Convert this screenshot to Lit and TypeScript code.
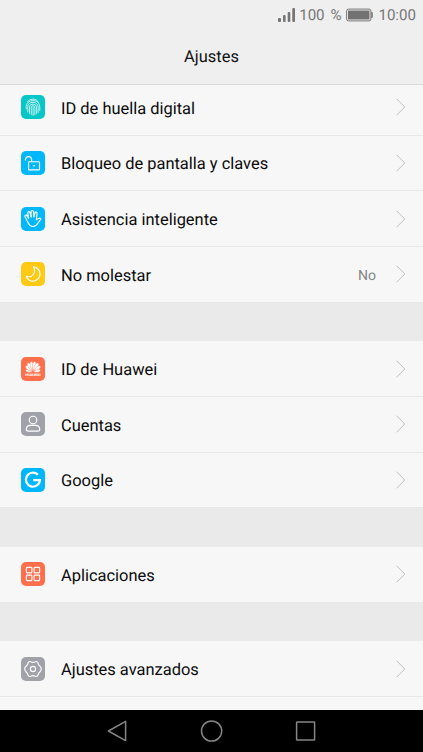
import { LitElement, html, css, svg } from "lit";
import { customElement, property } from "lit/decorators.js";

const petals = [-76, -51, -30, -10, 10, 30, 51, 76];

const glyphs: Record<string, unknown> = {
  finger: svg`<g stroke-width=".85" opacity=".9">
    <path d="M6.6 6.4Q9 4 12 4Q15.5 4 17.4 6.8"/>
    <path d="M5.2 14V11.2Q5.3 8.5 7.2 7.3Q9.2 5.6 12 5.6Q18.6 5.8 18.8 12V15.5"/>
    <path d="M6.8 17V11.8Q7 7.4 12 7.3Q17 7.5 17.2 12.5V17.5"/>
    <path d="M8.5 18.4V12Q8.7 9 12 9Q15.4 9.2 15.6 12.5V18.5"/>
    <path d="M10.3 19.5V12.4Q10.4 10.7 12 10.7Q13.8 10.8 13.9 13V19.8"/>
    <path d="M12.1 12.4V20.3"/></g>`,
  lock: svg`<rect x="7.6" y="10.7" width="10.9" height="8.1" rx=".6"/>
    <path d="M4.5 9.1V8.2A3.1 3.1 0 0 1 10.6 8.2V10.5"/><rect x="12.3" y="14" width="1.5" height="1.5" fill="#fff" stroke="none"/>`,
  hand: svg`<path d="M7.1 15.7L4.2 10.1Q3.6 8.5 4.8 8.1Q5.7 7.9 6.3 9.1L7.7 11.4L6.8 6.1Q6.7 4.7 7.8 4.6Q8.8 4.5 9.1 5.8L10.2 10.1L10 4.8Q10.1 3.5 11.2 3.5Q12.3 3.5 12.5 4.9L12.9 10L14 5.8Q14.4 4.7 15.3 5Q16.3 5.4 16 6.6L15.3 12.9Q17.1 11.5 18.4 11.2Q20 11 19.8 12.3Q18.5 13.8 17 16Q15 19.6 11.7 19.5Q8.9 19.4 7.1 15.7Z"/>`,
  moon: svg`<path d="M12.5 4.9A7.1 7.1 0 1 1 5.2 14.3Q10.3 15.8 12.5 12.2Q14.6 8.6 12.5 4.9Z"/>`,
  huawei: svg`<g fill="#fff" stroke="none">${petals.map((a) => {
    const k = Math.abs(a) > 60 ? 0.72 : Math.abs(a) > 40 ? 0.9 : 1;
    return svg`<path transform="translate(12 15) rotate(${a}) scale(${k})" d="M0 -.6Q-2.4 -5.6 -1.7 -8.6Q-1.1 -10.4 0 -10.6Q1.1 -10.4 1.7 -8.6Q2.4 -5.6 0 -.6Z"
      stroke="#ff6f4c" stroke-width=".4"/>`;
  })}</g><text x="12" y="19.2" text-anchor="middle" textLength="15.6" lengthAdjust="spacingAndGlyphs">HUAWEI</text>`,
  user: svg`<circle cx="12" cy="8" r="3.8"/>
    <path d="M7.2 19.1H16.8Q18.8 19.1 18.8 17.2Q18.3 13.3 14.7 13.3H9.3Q5.7 13.3 5.2 17.2Q5.2 19.1 7.2 19.1Z"/>`,
  google: svg`<path stroke-width="2.2" stroke-linecap="butt" stroke-linejoin="miter" d="M16.9 6.8A7 7 0 1 0 18.9 12.1H12.2"/>`,
  apps: svg`<rect x="5.4" y="5.4" width="5.5" height="5.5" rx=".8"/><rect x="13.1" y="5.4" width="5.5" height="5.5" rx=".8"/>
    <rect x="5.4" y="13.1" width="5.5" height="5.5" rx=".8"/><rect x="13.1" y="13.1" width="5.5" height="5.5" rx=".8"/>`,
  gear: svg`<path d="M8.3 4.6Q9.5 4.3 10.2 4.9Q12 5.9 13.8 4.9Q14.5 4.3 15.7 4.6Q16.9 5.2 17.1 6.3Q17.4 8 19 9.2Q20.3 10.6 20.3 12Q20.3 13.4 19 14.8Q17.4 16 17.1 17.7Q16.9 18.8 15.7 19.4Q14.5 19.7 13.8 19.1Q12 18.1 10.2 19.1Q9.5 19.7 8.3 19.4Q7.1 18.8 6.9 17.7Q6.6 16 5 14.8Q3.7 13.4 3.7 12Q3.7 10.6 5 9.2Q6.6 8 6.9 6.3Q7.1 5.2 8.3 4.6Z"/>
    <circle cx="12" cy="12" r="2.6"/>`,
};

interface Item {
  icon: string;
  color: string;
  label: string;
  value?: string;
}

const groups: Item[][] = [
  [
    { icon: "finger", color: "teal", label: "ID de huella digital" },
    { icon: "lock", color: "blue", label: "Bloqueo de pantalla y claves" },
    { icon: "hand", color: "blue", label: "Asistencia inteligente" },
    { icon: "moon", color: "yellow", label: "No molestar", value: "No" },
  ],
  [
    { icon: "huawei", color: "orange", label: "ID de Huawei" },
    { icon: "user", color: "gray", label: "Cuentas" },
    { icon: "google", color: "blue", label: "Google" },
  ],
  [{ icon: "apps", color: "orange", label: "Aplicaciones" }],
  [{ icon: "gear", color: "gray", label: "Ajustes avanzados" }],
];

@customElement("settings-row")
export class SettingsRow extends LitElement {
  @property({ attribute: false }) item!: Item;

  static styles = css`
    :host {
      display: flex;
      align-items: center;
      box-sizing: border-box;
      height: 55.65px;
      padding: 0 17px 0 21px;
      border-bottom: 1px solid #e8e8e8;
      background: #f7f7f7;
    }
    .tile { width: 24px; height: 24px; border-radius: 5px; flex: none; }
    .tile svg {
      display: block;
      width: 24px;
      height: 24px;
      fill: none;
      stroke: #fff;
      stroke-width: 1.15;
      stroke-linejoin: round;
      stroke-linecap: round;
    }
    .tile text { font: bold 3.6px Roboto, sans-serif; fill: #fff; stroke: none; }
    .teal { background: #06c7c8; }
    .blue { background: #00b7fc; }
    .yellow { background: #ffc914; }
    .orange { background: #ff6f4c; }
    .gray { background: #a1a1aa; }
    .label { flex: 1; margin-left: 16px; padding-top: 4.5px; font-size: 16.45px; line-height: 22px; color: #0b0b0b; white-space: nowrap; }
    .value { margin-right: 19px; padding-top: 3.5px; font-size: 14px; color: #858585; }
    .chevron { width: 11px; height: 18px; fill: none; stroke: #bdbdbd; stroke-width: 1; }
  `;

  render() {
    const { icon, color, label, value } = this.item;
    return html`
      <div class="tile ${color}"><svg viewBox="0 0 24 24">${glyphs[icon]}</svg></div>
      <span class="label">${label}</span>
      ${value ? html`<span class="value">${value}</span>` : null}
      <svg class="chevron" viewBox="0 0 11 18"><path d="M1.5 .7L9.8 9L1.5 17.3" /></svg>
    `;
  }
}

@customElement("app-root")
export class AppRoot extends LitElement {
  static styles = css`
    :host {
      display: flex;
      flex-direction: column;
      height: 752px;
      overflow: hidden;
      background: #f7f7f7;
      font-family: Roboto, sans-serif;
      text-rendering: geometricPrecision;
    }
    .status {
      flex: none;
      display: flex;
      justify-content: flex-end;
      align-items: center;
      height: 30px;
      padding-right: 7px;
      box-sizing: border-box;
      background: #efefef;
      color: #777;
      font-size: 15.1px;
      line-height: 30px;
    }
    .signal { width: 17px; height: 14px; fill: #757575; margin-right: 4px; }
    .percent { word-spacing: 2.2px; margin-right: 4.8px; }
    .battery { width: 27px; height: 14px; margin-right: 5px; }
    .title {
      flex: none;
      height: 55px;
      box-sizing: border-box;
      border-bottom: 1px solid #dadada;
      background: #efefef;
      text-align: center;
      font-size: 16.45px;
      line-height: 56px;
      color: #111;
    }
    .list { flex: 1; min-height: 0; overflow: hidden; background: #f7f7f7; }
    .group:first-child { margin-top: -4.9px; }
    .group + .group { padding-top: 38.7px; background: #eaeaea; }
    .nav {
      flex: none;
      display: flex;
      justify-content: center;
      align-items: center;
      gap: 70px;
      height: 42px;
      background: #000;
    }
    .nav svg { width: 24px; height: 24px; fill: none; stroke: #858585; stroke-width: 1.5; stroke-linejoin: round; }
  `;

  render() {
    return html`
      <div class="status">
        <svg class="signal" viewBox="0 0 17 14">
          <rect x="0" y="10" width="3" height="4" rx="1" /><rect x="5" y="7" width="2.6" height="7" rx="1" />
          <rect x="9.7" y="4" width="2.6" height="10" rx="1" /><rect x="14.3" y="0" width="2.7" height="14" rx="1" />
        </svg>
        <span class="percent">100 %</span>
        <svg class="battery" viewBox="0 0 27 14">
          <rect x=".6" y="1.1" width="24.3" height="11.8" rx="1.8" fill="none" stroke="#777" />
          <rect x="2" y="2.5" width="21.5" height="9" fill="#727272" />
          <path d="M25.3 4H26Q26.8 4 26.8 5V9Q26.8 10 26 10H25.3Z" fill="#727272" />
        </svg>
        <span>10:00</span>
      </div>
      <div class="title">Ajustes</div>
      <div class="list">
        ${groups.map(
          (g) => html`<div class="group">${g.map((item) => html`<settings-row .item=${item}></settings-row>`)}</div>`
        )}
      </div>
      <div class="nav">
        <svg viewBox="0 0 24 24"><path d="M2.4 12L19.6 2.4V21.6Z" /></svg>
        <svg viewBox="0 0 24 24"><circle cx="11.6" cy="12" r="10.1" /></svg>
        <svg viewBox="0 0 24 24"><rect x="2.6" y="3" width="18" height="18" rx=".5" /></svg>
      </div>
    `;
  }
}
